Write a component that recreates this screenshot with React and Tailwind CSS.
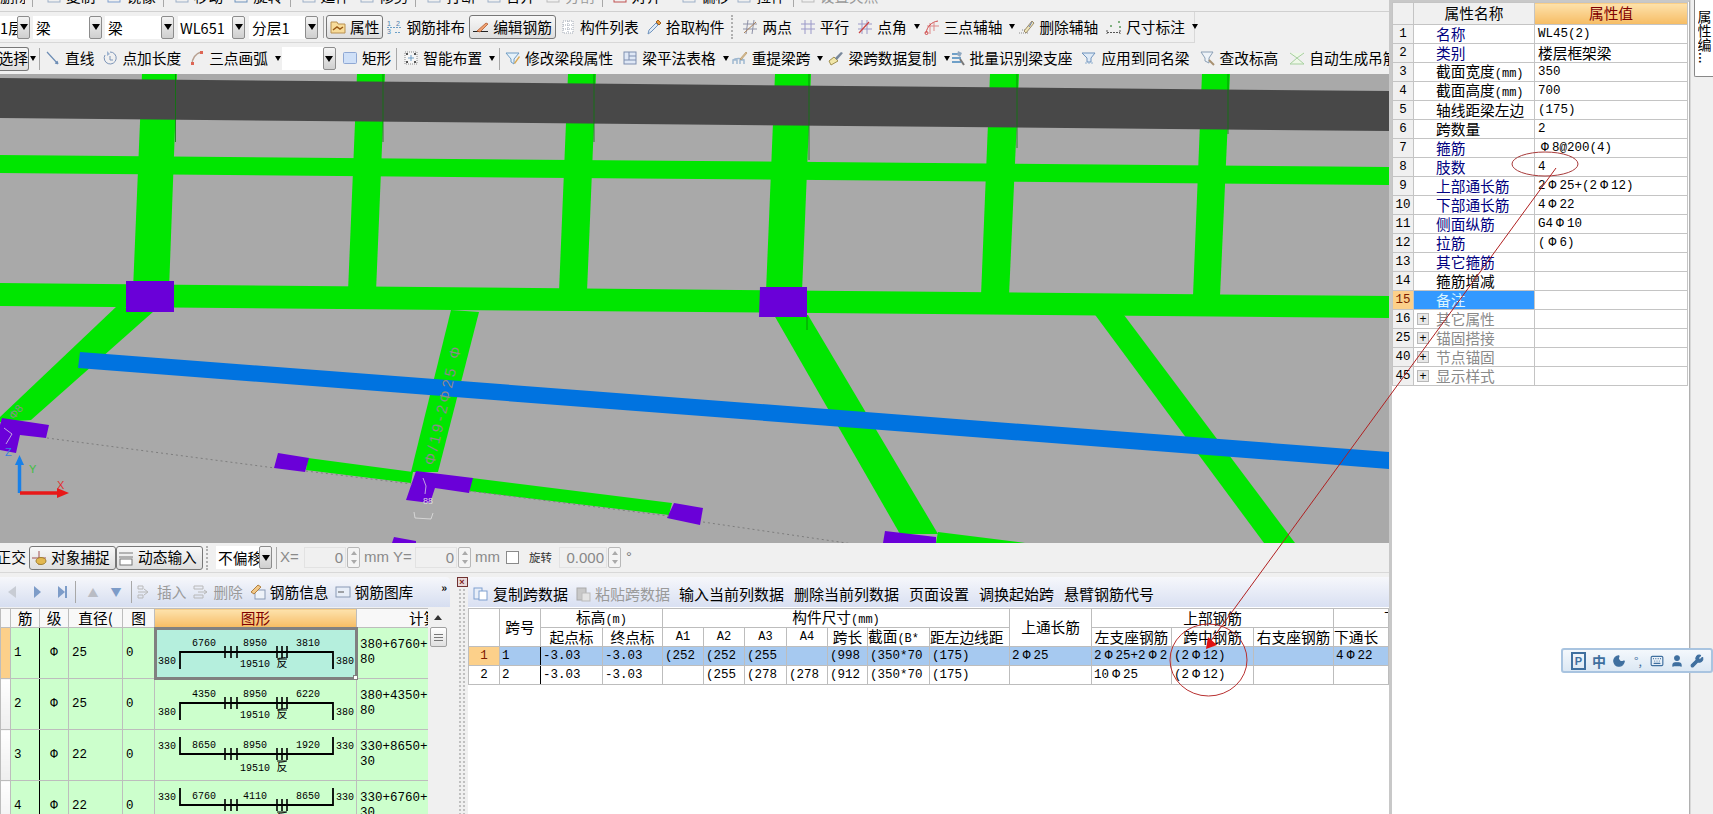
import { Moon, Keyboard, User, Wrench } from "lucide-react";

const CJK = "font-['Noto_Sans_CJK_SC',sans-serif]";
const MONO = "font-['Liberation_Mono','Noto_Sans_CJK_SC',monospace]";

// small toolbar glyphs, all on a 16 box
const ICONS = {
  attr: (
    <>
      <path d="M1 3h6l1 2h7v9H1z" fill="#f8dc9a" stroke="#b89050" />
      <path d="M3 11l4-3 3 2 3-2" fill="none" stroke="#9a5a18" strokeWidth="1.500" />
    </>
  ),
  layout: (
    <>
      <g fontFamily="Liberation Sans" fontSize="7" fill="#4f7fae">
        <text x="1" y="7">1</text>
        <text x="10" y="7">2</text>
        <text x="1" y="15">3</text>
      </g>
      <path d="M1 8.500h14M9 13.500h6" stroke="#6c9fc6" strokeDasharray="2 1" />
    </>
  ),
  edit: (
    <>
      <path d="M0 12.500h15" stroke="#222" />
      <path d="M4 12L13 4l2 1-8 8z" fill="#f0a070" stroke="#b05a30" strokeWidth="0.800" />
    </>
  ),
  list: (
    <>
      <rect x="3" y="2" width="10" height="12" fill="#fff" stroke="#a0a8b4" strokeDasharray="1 1" />
      <path d="M8 2v12M3 6h10M3 10h10" stroke="#a0a8b4" strokeDasharray="1 1" />
    </>
  ),
  pick: (
    <>
      <path d="M2 15l1-4 7-7 2 2-7 7z" fill="#dfeaf6" stroke="#6f93bd" />
      <path d="M10 3l2-2 3 3-2 2z" fill="#e89a3c" stroke="#a06020" />
    </>
  ),
  twoPt: (
    <>
      <path d="M6 1L4 15M12 1L10 15M1 5h14M1 10h14" fill="none" stroke="#8f92a8" />
      <path d="M2 14L14 3" stroke="#a8805a" />
    </>
  ),
  parallel: <path d="M5 1v14M11 1v14M1 5h14M1 10h14" fill="none" stroke="#9a98c8" />,
  angle: (
    <>
      <path d="M5 1v14M10 1v14M1 5h14M1 10h14" fill="none" stroke="#9a98c8" />
      <path d="M2 14L12 3" stroke="#c44" strokeWidth="1.200" />
    </>
  ),
  threePt: (
    <>
      <path d="M6 4v11M10 4v8M3 7h12" fill="none" stroke="#dd8888" />
      <path d="M2 14C3 8 7 3 14 2" fill="none" stroke="#d04848" />
      <circle cx="2.500" cy="14" r="1.500" fill="none" stroke="#d04848" />
    </>
  ),
  delAxis: (
    <>
      <path d="M0 14h9M3 11h5" stroke="#8a8a8a" strokeDasharray="1 1" />
      <path d="M5 12l8-10 2 2-8 10z" fill="#efe6b8" stroke="#9a8a6a" />
      <path d="M10 8l3-5" stroke="#6a7fb5" />
    </>
  ),
  dim: (
    <>
      <path d="M1 11v4M14 11v4M1 13.500h13" stroke="#555" strokeDasharray="2 1" />
      <rect x="4" y="6" width="2" height="2" fill="#7fb07f" />
      <rect x="12" y="2" width="2" height="2" fill="#7fb07f" />
      <rect x="13" y="7" width="2" height="2" fill="#7fb07f" />
    </>
  ),
  line: <path d="M2 2l11 12M13 14l-3-1M13 14l-1-3" fill="none" stroke="#6d8db5" strokeWidth="1.200" />,
  addLen: (
    <>
      <path d="M8 2a6 6 0 1 1-5 3" fill="none" stroke="#7d95b8" />
      <path d="M5 1v5l3-2z" fill="#9fb4d0" />
      <path d="M8 6v4h3" fill="none" stroke="#7d95b8" />
    </>
  ),
  arc: (
    <>
      <path d="M3 15C3 8 6 4 12 2" fill="none" stroke="#b8a090" strokeWidth="1.400" />
      <rect x="11" y="1" width="3" height="3" fill="#d65" />
      <rect x="2" y="12" width="3" height="3" fill="#d65" />
    </>
  ),
  rect: <rect x="1.500" y="2.500" width="13" height="11" rx="1" fill="#cfe0f8" stroke="#8fa8d4" />,
  smart: (
    <>
      <rect x="2" y="2" width="12" height="12" fill="#f6f6f6" stroke="#888" strokeDasharray="1 1" />
      <path d="M8 5v6M5 8h6" stroke="#6f9fc8" />
      <rect x="3" y="3" width="2" height="2" fill="#555" />
      <rect x="11" y="3" width="2" height="2" fill="#555" />
      <rect x="3" y="11" width="2" height="2" fill="#555" />
      <rect x="11" y="11" width="2" height="2" fill="#555" />
    </>
  ),
  segAttr: (
    <>
      <path d="M1 3h13L9 9v5L6 12V9z" fill="#e6f2fa" stroke="#6f9cc4" />
      <path d="M9 13l5-7 1 1-5 7z" fill="#d9a850" />
    </>
  ),
  table: (
    <>
      <rect x="2" y="2" width="12" height="12" fill="#dfe8f6" stroke="#7f8fb0" />
      <path d="M2 10h12M7 6h7M7 2v8" stroke="#7f8fb0" />
    </>
  ),
  reSpan: (
    <>
      <path d="M1 14V10h4v4M8 14V10h4v4M1 10c2-2 9-2 11 0" fill="none" stroke="#9fb8d0" strokeWidth="1.500" />
      <path d="M8 9l6-7 1 1-6 7z" fill="#d8c098" stroke="#b08a50" strokeWidth="0.600" />
    </>
  ),
  copySpan: (
    <>
      <path d="M3 15l-2-4 5-4 4 4z" fill="#f1e6a8" stroke="#a09050" />
      <path d="M7 8l6-6 2 1-6 7z" fill="#78889c" />
    </>
  ),
  batch: (
    <>
      <path d="M2 4h9M2 8h9M2 12h9" stroke="#6fa0c8" strokeWidth="2" />
      <path d="M10 9l4 6" stroke="#777" strokeWidth="2" />
      <path d="M8 1l4 2-2 4-3-2z" fill="#90a8c0" />
    </>
  ),
  sameName: (
    <>
      <path d="M1 3h13L10 8v4H6V8z" fill="#dfeaf6" stroke="#6f93bd" />
      <path d="M4 13h9" stroke="#8fb0d0" strokeDasharray="2 1" />
    </>
  ),
  level: (
    <>
      <path d="M1 2h12l-4 6v5L5 11V8z" fill="#eef3f8" stroke="#8a9fb5" />
      <path d="M9 10l5 5" stroke="#a89070" strokeWidth="2" />
    </>
  ),
  hanger: <path d="M1 3l7 5 7-5M1 14l7-6 7 6z" fill="#eef8e8" stroke="#a8d0a0" />,
  insert: <path d="M1 2h5v3H1zM1 11h5v3H1zM1 8h9M7 5l4 3-4 3" fill="none" stroke="#b8b8b8" />,
  remove: <path d="M1 2h9v3H1zM1 11h9v3H1zM5 8h9M11 6l3 2-3 2" fill="none" stroke="#b8b8b8" />,
  info: (
    <>
      <rect x="5" y="6" width="10" height="9" fill="#eef2f8" stroke="#8a9ab5" />
      <path d="M1 8l7-7 3 2-7 7z" fill="#f2c888" stroke="#b08040" />
    </>
  ),
  lib: (
    <>
      <rect x="1" y="3" width="14" height="10" fill="#e8eef8" stroke="#8a9ab5" />
      <path d="M3 8h6" stroke="#555" />
    </>
  ),
  copy: (
    <>
      <rect x="1" y="2" width="8" height="11" fill="#e8eef8" stroke="#7f9fcf" />
      <rect x="6" y="5" width="8" height="9" fill="#fff" stroke="#7f9fcf" />
    </>
  ),
  paste: (
    <>
      <rect x="2" y="2" width="9" height="12" fill="#c8c8c8" stroke="#aaa" />
      <rect x="7" y="7" width="8" height="8" fill="#e4e4e4" stroke="#bbb" />
    </>
  ),
  snap: (
    <>
      <path d="M1 8h14M8 1v14" stroke="#a05050" />
      <ellipse cx="10" cy="11" rx="5" ry="3.500" fill="#e3b850" stroke="#a08030" />
    </>
  ),
  dyn: (
    <>
      <path d="M1 3h14M1 7h14" stroke="#777" />
      <rect x="2" y="9" width="12" height="6" fill="#fff" stroke="#777" />
    </>
  ),
};

function Ico({ name, className = "w-4 h-4" }) {
  return (
    <svg viewBox="0 0 16 16" className={`shrink-0 ${className}`}>
      {ICONS[name]}
    </svg>
  );
}

function Caret({ className = "" }) {
  return <span className={`shrink-0 w-0 h-0 border-x-[3.5px] border-x-transparent border-t-[5px] border-t-black ${className}`} />;
}

function Select({ label, className, labelClass = "pl-[3px]" }) {
  return (
    <div className={`flex items-stretch h-[23px] shrink-0 bg-white ${className}`}>
      <span className={`flex-1 min-w-0 overflow-hidden whitespace-nowrap leading-[23px] ${labelClass}`}>{label}</span>
      <span className="w-[13px] shrink-0 flex items-center justify-center border border-[#8c8c8c] rounded-[2px] bg-gradient-to-b from-[#f4f4f4] to-[#cfcfcf]">
        <Caret className="border-x-[4px] border-t-[6px]" />
      </span>
    </div>
  );
}

function Tool({ icon, label, caret, className = "", gray, pressed }) {
  return (
    <div
      className={`flex items-center shrink-0 gap-[4px] ${gray ? "text-[#9a9a9a]" : "text-black"} ${
        pressed ? "h-[24px] px-[3px] border border-[#777] rounded-[3px] bg-gradient-to-b from-[#f8f8f8] to-[#dedede]" : ""
      } ${className}`}
    >
      <Ico name={icon} />
      <span className="whitespace-nowrap">{label}</span>
      {caret && <Caret className="ml-[3px]" />}
    </div>
  );
}

const Sep = ({ className = "" }) => <span className={`w-px h-[22px] bg-[#a8a8a8] shrink-0 ${className}`} />;

function TopCut() {
  const items = [
    ["复制", "ml-[13px]", "#9db0c8"],
    ["镜像", "ml-[11px]", "#7f9fcf"],
    null,
    ["移动", "ml-[10px]", "#9db0c8"],
    ["旋转", "ml-[10px]", "#6f93bd"],
    null,
    ["延伸", "ml-[10px]", "#9db0c8"],
    ["修剪", "ml-[9px]", "#9db0c8"],
    null,
    ["打断", "ml-[10px]", "#9db0c8"],
    ["合并", "ml-[10px]", "#9db0c8"],
    ["分割", "ml-[10px]", "#bbbbbb", true],
    null,
    ["对齐", "ml-[9px]", "#c05050"],
    ["偏移", "ml-[20px]", "#9db0c8"],
    ["拉伸", "ml-[6px]", "#9db0c8"],
    null,
    ["设置夹点", "ml-[6px]", "#bbbbbb", true],
  ];
  return (
    <div className="h-[12px] overflow-hidden border-b border-[#d0d0d0] shrink-0">
      <div className="-mt-[14px] h-[20px] flex items-center text-[14.7px] leading-[20px]">
        <span className="w-[25px] overflow-hidden whitespace-nowrap text-right">删除</span>
        <Sep className="ml-[7px]" />
        {items.map((it, i) =>
          it ? (
            <div key={i} className={`flex items-center gap-[4px] shrink-0 ${it[1]} ${it[3] ? "text-[#9a9a9a]" : ""}`}>
              <svg viewBox="0 0 16 16" className="w-4 h-4"><rect x="2" y="2" width="12" height="12" fill="none" stroke={it[2]} /></svg>
              <span>{it[0]}</span>
            </div>
          ) : (
            <Sep key={i} className="ml-[7px]" />
          )
        )}
      </div>
    </div>
  );
}

function Toolbar1() {
  return (
    <div className="h-[31px] shrink-0 flex items-center border-b border-[#d8d8d8] text-[14.7px] w-[1195px] border-r">
      <Select label="1层" className="w-[30px]" labelClass="" />
      <Select label="梁" className="w-[69px] ml-[3px]" />
      <Select label="梁" className="w-[69px] ml-[3px]" />
      <Select label="WL651" className="w-[67px] ml-[4px]" labelClass="pl-[2px] text-[14.5px]" />
      <Select label="分层1" className="w-[69px] ml-[4px]" />
      <Sep className="ml-[5px]" />
      <Tool icon="attr" label="属性" pressed className="ml-[2px]" />
      <Tool icon="layout" label="钢筋排布" className="ml-[3px]" />
      <Tool icon="edit" label="编辑钢筋" pressed className="ml-[4px]" />
      <Tool icon="list" label="构件列表" className="ml-[4px]" />
      <Tool icon="pick" label="拾取构件" className="ml-[7px]" />
      <span className="ml-[7px] h-[24px] w-[2px] border-l-2 border-dotted border-[#b0b0b0] shrink-0" />
      <Tool icon="twoPt" label="两点" className="ml-[9px]" />
      <Tool icon="parallel" label="平行" className="ml-[8px]" />
      <Tool icon="angle" label="点角" caret className="ml-[8px]" />
      <Tool icon="threePt" label="三点辅轴" caret className="ml-[4px]" />
      <Tool icon="delAxis" label="删除辅轴" className="ml-[4px] gap-[2px]" />
      <Tool icon="dim" label="尺寸标注" caret className="ml-[8px]" />
    </div>
  );
}

function Toolbar2() {
  return (
    <div className="h-[31px] shrink-0 flex items-center text-[14.7px] overflow-hidden">
      <div className="w-[29px] h-[24px] border border-[#777] border-l-0 rounded-r-[3px] bg-gradient-to-b from-[#f8f8f8] to-[#dedede] overflow-hidden whitespace-nowrap flex justify-end items-center shrink-0">
        选择
      </div>
      <Caret className="ml-[1px]" />
      <Sep className="ml-[3px]" />
      <Tool icon="line" label="直线" className="ml-[5px]" />
      <Tool icon="addLen" label="点加长度" className="ml-[8px]" />
      <Tool icon="arc" label="三点画弧" caret className="ml-[8px]" />
      <Select label="" className="w-[54px] ml-[1px]" />
      <Tool icon="rect" label="矩形" className="ml-[6px]" />
      <Sep className="ml-[5px]" />
      <Tool icon="smart" label="智能布置" caret className="ml-[6px]" />
      <Sep className="ml-[4px]" />
      <Tool icon="segAttr" label="修改梁段属性" className="ml-[5px]" />
      <Tool icon="table" label="梁平法表格" caret className="ml-[9px]" />
      <Tool icon="reSpan" label="重提梁跨" caret className="ml-[3px]" />
      <Tool icon="copySpan" label="梁跨数据复制" caret className="ml-[5px]" />
      <Tool icon="batch" label="批量识别梁支座" className="gap-[2px]" />
      <Tool icon="sameName" label="应用到同名梁" className="ml-[9px]" />
      <Tool icon="level" label="查改标高" className="ml-[10px]" />
      <Tool icon="hanger" label="自动生成吊筋" className="ml-[11px]" />
    </div>
  );
}

function Canvas() {
  const GREEN = "#00e600";
  const PURPLE = "#6a00d8";
  const BLUE = "#0073e0";
  const green = [
    "142,74 177,74 169,290 133,290",
    "357,74 385,74 376,292 348,292",
    "568,74 596,74 587,292 559,292",
    "775,74 811,74 802,292 766,292",
    "990,74 1019,74 1009,296 981,296",
    "1202,74 1230,74 1220,296 1193,296",
    "0,155 1389,167 1389,185 0,173",
    "0,283 1389,296 1389,318 0,306",
    "117,306 154,311 31,420 0,422 0,417",
    "451,310 479,312 438,472 411,472",
    "774,315 808,315 938,534 900,534",
    "1093,312 1124,315 1295,543 1264,543",
    "308,458 413,472 411,483 306,470",
    "472,478 672,503 669,515 469,491",
    "938,532 1025,543 936,543",
  ];
  const purple = [
    "126,281 174,281 174,312 126,312",
    "760,287 807,287 807,317 759,317",
    "278,453 309,458 305,472 274,468",
    "416,471 473,478 469,493 435,488 430,503 406,500",
    "2,418 49,425 46,438 20,435 16,453 0,450 0,425",
    "674,503 703,508 700,525 667,518",
    "394,537 416,541 416,543 392,543",
    "885,531 936,537 936,543 883,543",
  ];
  return (
    <svg viewBox="0 74 1389 469" className="w-[1389px] h-[469px] block shrink-0 bg-[#a9a9a9]">
      {green.map((p) => (
        <polygon key={p} points={p} fill={GREEN} />
      ))}
      <polygon points="0,78 1389,91 1389,131 0,118" fill="#484848" />
      <path
        d="M175.500 74V142M383 74V142M594 74V142M809 74V160M1017 74V148M1228 74V134M807 317V330"
        stroke="#0a7a0a"
        strokeWidth="0.800"
      />
      {purple.map((p) => (
        <polygon key={p} points={p} fill={PURPLE} />
      ))}
      <polygon points="80,352 1389,452 1389,469 78,368" fill={BLUE} />
      <path d="M47,438 L275,468 M306,471 L412,484 M469,491 L669,516 M703,522 L860,545" stroke="#7d7d7d" strokeDasharray="2 3" />
      <g fill="#8a8a8a" fontFamily="Liberation Sans" fontSize="15">
        <text transform="translate(434,466) rotate(-77)" letterSpacing="3">Φ/19-2Φ25 Φ</text>
        <text transform="translate(14,420) rotate(-50)" fontSize="11">Φ8</text>
      </g>
      <text x="423" y="504" fill="#ddd" fontSize="9" fontFamily="Liberation Sans">88</text>
      <path d="M423,478l3,8 -1,8M4,428l8,6 -6,10M414,512l1,6 16,1 2,-6" fill="none" stroke="#e8e8e8" strokeWidth="0.700" />
      {/* axis */}
      <path d="M19.500 493V464" stroke="#1880e8" strokeWidth="3.500" />
      <polygon points="19.500,455 24,465 15,465" fill="#1880e8" />
      <path d="M20 493H60" stroke="#e81818" strokeWidth="3.500" />
      <polygon points="69,493 57,488 57,498" fill="#e81818" />
      <g fontFamily="Liberation Sans" fontSize="11">
        <text x="57" y="489" fill="#e03030">X</text>
        <text x="29" y="473" fill="#40c040">Y</text>
        <text x="5" y="456" fill="#3a80e0">Z</text>
      </g>
    </svg>
  );
}

function SpinInput({ value, className }) {
  return (
    <div className="flex shrink-0">
      <div className={`h-[21px] bg-[#f0f0f0] border border-[#e2e2e2] text-right pr-[2px] text-[#888] leading-[20px] font-['Liberation_Sans'] text-[15px] ${className}`}>{value}</div>
      <div className="w-[13px] h-[21px] flex flex-col border border-[#b8b8b8] rounded-[2px] ml-[1px] items-center justify-around bg-[#f4f4f4]">
        <span className="w-0 h-0 border-x-[3px] border-x-transparent border-b-[4px] border-b-[#aaa]" />
        <span className="w-0 h-0 border-x-[3px] border-x-transparent border-t-[4px] border-t-[#aaa]" />
      </div>
    </div>
  );
}

function StatusBar() {
  return (
    <div className="h-[30px] shrink-0 flex items-center text-[14.7px] border-b border-[#d8d8d8] overflow-hidden">
      <span className="w-[26px] overflow-hidden whitespace-nowrap flex justify-end shrink-0">正交</span>
      <Tool icon="snap" label="对象捕捉" pressed className="ml-[3px] gap-[2px] !px-[1px] w-[87px]" />
      <Tool icon="dyn" label="动态输入" pressed className="gap-[2px] !px-[1px] w-[87px]" />
      <span className="ml-[3px] h-[24px] w-[2px] border-l-2 border-dotted border-[#b0b0b0] shrink-0" />
      <Select label="不偏移" className="w-[56px] ml-[8px]" labelClass="pl-[2px]" />
      <Sep className="ml-[4px]" />
      <div className="ml-[3px] text-[#8a8a8a] font-['Liberation_Sans'] text-[15px] w-[24px] shrink-0">X=</div>
      <SpinInput value="0" className="w-[42px]" />
      <div className="ml-[4px] text-[#8a8a8a] font-['Liberation_Sans'] text-[15px] w-[51px] shrink-0">mm Y=</div>
      <SpinInput value="0" className="w-[42px]" />
      <div className="ml-[4px] text-[#8a8a8a] font-['Liberation_Sans'] text-[15px] w-[28px] shrink-0">mm</div>
      <span className="ml-[3px] w-[13px] h-[13px] border border-[#8a8a8a] bg-white shrink-0" />
      <span className="ml-[10px] text-[11.500px] text-[#333] w-[30px] whitespace-nowrap shrink-0">旋转</span>
      <SpinInput value="0.000" className="w-[48px]" />
      <span className="ml-[5px] text-[#777] font-['Liberation_Sans']">°</span>
    </div>
  );
}

function Shape({ left, a, b, c, right, up }) {
  const hook = up ? "M25 7V24H178V7" : "M25 41V24H178V41";
  const side = up ? 16 : 33;
  const sub = up ? 38 : 36;
  return (
    <svg viewBox="0 0 202 50" className="w-[202px] h-[50px] block">
      <path d={hook} fill="none" stroke="#000" strokeWidth="1.800" />
      <path d="M70 18V30M76 18V30M82 18V30M122 18V30M127 18V30M132 18V30" stroke="#000" strokeWidth="1.600" />
      <path d="M122 31H132" stroke="#000" strokeWidth="1" />
      <g fontFamily="Liberation Mono" fontSize="10" textAnchor="middle" fill="#000" dominantBaseline="middle">
        <text x="49" y="15">{a}</text>
        <text x="100" y="15">{b}</text>
        <text x="153" y="15">{c}</text>
        <text x="12" y={side}>{left}</text>
        <text x="190" y={side}>{right}</text>
        <text x="100" y={sub}>19510</text>
        <text x="127" y={sub} fontFamily="Noto Sans CJK SC" fontSize="11">反</text>
      </g>
    </svg>
  );
}

const BAR_ROWS = [
  { n: 1, d: 25, left: 380, a: 6760, b: 8950, c: 3810, right: 380, calc: "380+6760+", calc2: "80", on: true },
  { n: 2, d: 25, left: 380, a: 4350, b: 8950, c: 6220, right: 380, calc: "380+4350+", calc2: "80" },
  { n: 3, d: 22, left: 330, a: 8650, b: 8950, c: 1920, right: 330, calc: "330+8650+", calc2: "30", up: true },
  { n: 4, d: 22, left: 330, a: 6760, b: 4110, c: 8650, right: 330, calc: "330+6760+", calc2: "30", up: true },
];

function BarPanel() {
  const nav = "w-0 h-0 border-y-[6px] border-y-transparent";
  return (
    <div className="w-[450px] shrink-0 flex flex-col pt-[4px] overflow-hidden">
      <div className="h-[30px] shrink-0 flex items-center bg-gradient-to-b from-[#f6f7fb] to-[#d6def0] text-[14.7px] rounded-tr-[4px] relative">
        <span className={`${nav} ml-[8px] border-r-[8px] border-r-[#c8ccd4]`} />
        <span className={`${nav} ml-[18px] border-l-[7px] border-l-[#7d9cc8]`} />
        <span className={`${nav} ml-[17px] border-l-[7px] border-l-[#7d9cc8]`} />
        <span className="w-[2px] h-[12px] bg-[#7d9cc8]" />
        <Sep className="ml-[8px]" />
        <span className="ml-[10px] text-[#b9bcc4] text-[11px] w-[14px] text-center">▲</span>
        <span className="ml-[9px] text-[#7d9cc8] text-[11px] w-[14px] text-center">▼</span>
        <Sep className="ml-[8px]" />
        <Tool icon="insert" label="插入" gray className="ml-[5px]" />
        <Tool icon="remove" label="删除" gray className="ml-[7px]" />
        <Tool icon="info" label="钢筋信息" className="ml-[7px]" />
        <Tool icon="lib" label="钢筋图库" className="ml-[6px]" />
        <span className="absolute right-[3px] top-[2px] text-[11px] font-bold">»</span>
      </div>
      <div className="flex flex-1 min-h-0 bg-white mt-px">
        <div className="w-[428px] shrink-0 overflow-hidden">
          <table className="table-fixed border-collapse w-[428px] text-[14.7px]">
            <colgroup>
              <col className="w-[10px]" />
              <col className="w-[29px]" />
              <col className="w-[29px]" />
              <col className="w-[54px]" />
              <col className="w-[32px]" />
              <col className="w-[202px]" />
              <col className="w-[72px]" />
            </colgroup>
            <thead>
              <tr className="h-[19px] bg-[#f8f8f8] leading-none">
                <th className="border border-[#bdbdbd] font-normal" />
                <th className="border border-[#bdbdbd] font-normal">筋</th>
                <th className="border border-[#bdbdbd] font-normal">级</th>
                <th className="border border-[#bdbdbd] font-normal overflow-hidden whitespace-nowrap">直径(</th>
                <th className="border border-[#bdbdbd] font-normal">图</th>
                <th className="border border-[#bdbdbd] font-normal text-[#800000] bg-gradient-to-b from-[#fde2ac] to-[#f6bc62]">图形</th>
                <th className="border border-[#bdbdbd] font-normal overflow-hidden whitespace-nowrap text-left pl-[52px]">计算</th>
              </tr>
            </thead>
            <tbody className={MONO}>
              {BAR_ROWS.map((r) => (
                <tr key={r.n} className="h-[50px] bg-[#ccffcc] text-[12.500px]">
                  <td className={`border border-[#bdbdbd] ${r.on ? "bg-[#fcd08a]" : "bg-gradient-to-b from-white to-[#eeeeee]"}`} />
                  <td className="border border-[#bdbdbd] border-r-black pl-[3px]">{r.n}</td>
                  <td className="border border-[#bdbdbd] text-center">Φ</td>
                  <td className="border border-[#bdbdbd] pl-[3px]">{r.d}</td>
                  <td className="border border-[#bdbdbd] pl-[3px]">0</td>
                  <td className={`border border-[#bdbdbd] p-0 relative ${r.on ? "bg-[#b5efdd] outline-3 -outline-offset-2 outline-[#808080]" : ""}`}>
                    <Shape {...r} />
                    {r.on && <span className="absolute -right-[2px] -bottom-[2px] w-[5px] h-[5px] bg-white border border-[#808080]" />}
                  </td>
                  <td className="border border-[#bdbdbd] pl-[3px] leading-[15px] overflow-hidden whitespace-nowrap">
                    {r.calc}
                    <br />
                    {r.calc2}
                  </td>
                </tr>
              ))}
            </tbody>
          </table>
        </div>
        <div className="w-[20px] shrink-0 bg-[#f0f0f0] flex flex-col items-center">
          <span className="mt-[7px] w-0 h-0 border-x-[4px] border-x-transparent border-b-[5px] border-b-[#333]" />
          <div className="mt-[7px] w-[17px] h-[20px] border border-[#a0a0a0] rounded-[2px] bg-gradient-to-b from-white to-[#e0e0e0] flex flex-col justify-center items-center gap-[2px]">
            <span className="w-[9px] h-px bg-[#777]" />
            <span className="w-[9px] h-px bg-[#777]" />
            <span className="w-[9px] h-px bg-[#777]" />
          </div>
        </div>
        <div className="flex-1 bg-[#f0f0f0]" />
      </div>
    </div>
  );
}

const SPAN_COLS = [
  "w-[31px]", "w-[41px]", "w-[62px]", "w-[60px]", "w-[41px]", "w-[41px]", "w-[42px]", "w-[41px]", "w-[40px]",
  "w-[62px]", "w-[80px]", "w-[82px]", "w-[80px]", "w-[82px]", "w-[80px]", "w-[55px]",
];

// rebar grade mark is double width in the app's font
function Bar() {
  return <span className="inline-block w-[14px] text-center text-[13px] leading-none">Φ</span>;
}

function SpanPanel() {
  const td = "border border-[#bdbdbd] px-[2px] overflow-hidden whitespace-nowrap";
  const th = "border border-[#bdbdbd] font-normal overflow-hidden whitespace-nowrap";
  const rows = [
    {
      n: 1, on: true,
      cells: [
        "-3.03", "-3.03", "(252", "(252", "(255", "", "(998", "(350*70", "(175)",
        <>2<Bar />25</>, <>2<Bar />25+2<Bar />2</>, <>(2<Bar />12)</>, "", <>4<Bar />22</>,
      ],
    },
    {
      n: 2,
      cells: [
        "-3.03", "-3.03", "", "(255", "(278", "(278", "(912", "(350*70", "(175)",
        "", <>10<Bar />25</>, <>(2<Bar />12)</>, "", "",
      ],
    },
  ];
  return (
    <div className="flex-1 min-w-0 flex mt-[4px] ml-[6px] overflow-hidden">
      <div className="w-[12px] shrink-0 flex flex-col items-center">
        <span className="w-[11px] h-[10px] border border-[#703030] bg-[#e8d8d8] text-[#802020] text-[9px] leading-[8px] text-center font-bold font-['Liberation_Sans']">×</span>
        <div className="flex-1 w-[8px] mt-px bg-[radial-gradient(#c0c0c0_1px,transparent_1px)] bg-[length:4px_4px]" />
      </div>
      <div className="flex-1 min-w-0 flex flex-col bg-white">
        <div className="h-[30px] shrink-0 flex items-end pb-[2px] pl-[5px] gap-[10px] bg-gradient-to-b from-[#f6f7fb] to-[#d9e0f2] text-[15px]">
          <Tool icon="copy" label="复制跨数据" className="gap-[3px]" />
          <Tool icon="paste" label="粘贴跨数据" gray className="gap-[4px] -ml-[3px]" />
          <span className="-ml-[1px] whitespace-nowrap">输入当前列数据</span>
          <span className="whitespace-nowrap">删除当前列数据</span>
          <span className="whitespace-nowrap">页面设置</span>
          <span className="whitespace-nowrap">调换起始跨</span>
          <span className="whitespace-nowrap">悬臂钢筋代号</span>
        </div>
        <table className="table-fixed border-collapse w-[920px] mt-px text-[14.7px] leading-none">
          <colgroup>
            {SPAN_COLS.map((c, i) => (
              <col key={i} className={c} />
            ))}
          </colgroup>
          <thead>
            <tr className="h-[19px]">
              <th rowSpan={2} className={th} />
              <th rowSpan={2} className={th}>跨号</th>
              <th colSpan={2} className={th}>标高<span className={`${MONO} text-[12px]`}>(m)</span></th>
              <th colSpan={7} className={th}>构件尺寸<span className={`${MONO} text-[12px]`}>(mm)</span></th>
              <th rowSpan={2} className={th}>上通长筋</th>
              <th colSpan={3} className={th}>上部钢筋</th>
              <th className={`${th} text-left pl-[50px]`}>下部钢筋</th>
            </tr>
            <tr className="h-[19px]">
              <th className={th}>起点标</th>
              <th className={th}>终点标</th>
              <th className={`${th} ${MONO} text-[12px]`}>A1</th>
              <th className={`${th} ${MONO} text-[12px]`}>A2</th>
              <th className={`${th} ${MONO} text-[12px]`}>A3</th>
              <th className={`${th} ${MONO} text-[12px]`}>A4</th>
              <th className={th}>跨长</th>
              <th className={`${th} text-left`}>截面<span className={`${MONO} text-[12px]`}>(B*</span></th>
              <th className={`${th} text-left`}>距左边线距</th>
              <th className={th}>左支座钢筋</th>
              <th className={th}>跨中钢筋</th>
              <th className={th}>右支座钢筋</th>
              <th className={`${th} text-left`}>下通长</th>
            </tr>
          </thead>
          <tbody className={`${MONO} text-[12.500px]`}>
            {rows.map((r) => (
              <tr key={r.n} className={`h-[19px] ${r.on ? "bg-[#a6c9f0]" : ""}`}>
                <td className={`${td} text-center ${r.on ? "bg-[#fcd08a] text-[#802000]" : ""}`}>{r.n}</td>
                <td className={`${td} border-r-black`}>{r.n}</td>
                {r.cells.map((c, i) => (
                  <td key={i} className={td}>{c}</td>
                ))}
              </tr>
            ))}
          </tbody>
        </table>
      </div>
    </div>
  );
}

const NAVY = "text-[#000080]";
const PROPS = [
  { n: 1, name: "名称", v: "WL45(2)", c: NAVY },
  { n: 2, name: "类别", v: "楼层框架梁", c: NAVY, cjk: true },
  { n: 3, name: "截面宽度", unit: "(mm)", v: "350" },
  { n: 4, name: "截面高度", unit: "(mm)", v: "700" },
  { n: 5, name: "轴线距梁左边", v: "(175)" },
  { n: 6, name: "跨数量", v: "2" },
  { n: 7, name: "箍筋", v: <><Bar />8@200(4)</>, c: NAVY },
  { n: 8, name: "肢数", v: "4", c: NAVY },
  { n: 9, name: "上部通长筋", v: <>2<Bar />25+(2<Bar />12)</>, c: NAVY },
  { n: 10, name: "下部通长筋", v: <>4<Bar />22</>, c: NAVY },
  { n: 11, name: "侧面纵筋", v: <>G4<Bar />10</>, c: NAVY },
  { n: 12, name: "拉筋", v: <>(<Bar />6)</>, c: NAVY },
  { n: 13, name: "其它箍筋", v: "", c: NAVY },
  { n: 14, name: "箍筋增减", v: "" },
  { n: 15, name: "备注", v: "", sel: true },
  { n: 16, name: "其它属性", v: "", plus: true },
  { n: 25, name: "锚固搭接", v: "", plus: true },
  { n: 40, name: "节点锚固", v: "", plus: true },
  { n: 45, name: "显示样式", v: "", plus: true },
];

function PropPanel() {
  return (
    <div className="w-[301px] shrink-0 h-full bg-white border-l-[3px] border-t-2 border-[#c8c8c8] border-r border-r-[#b0b0b0]">
      <table className="table-fixed border-collapse w-[295px] text-[14.7px]">
        <colgroup>
          <col className="w-[21px]" />
          <col className="w-[121px]" />
          <col className="w-[153px]" />
        </colgroup>
        <thead>
          <tr className="h-[22px] leading-none">
            <th className="border border-[#c4c4c4] bg-[#f0f0f0] font-normal" />
            <th className="border border-[#c4c4c4] bg-[#f0f0f0] font-normal">属性名称</th>
            <th className="border border-[#c4c4c4] font-normal text-[#800000] bg-gradient-to-b from-[#fde2ac] to-[#f6bc62]">属性值</th>
          </tr>
        </thead>
        <tbody>
          {PROPS.map((p) => (
            <tr key={p.n} className="h-[19px] leading-none">
              <td className={`border border-[#c4c4c4] text-center text-[12.500px] ${MONO} ${p.sel ? "bg-[#fcd08a] text-[#802000]" : "bg-[#f0f0f0]"}`}>{p.n}</td>
              <td className={`border border-[#c4c4c4] relative pl-[22px] whitespace-nowrap overflow-hidden ${p.sel ? "bg-[#3399ff] text-[#d8f4ff]" : ""} ${p.plus ? "text-[#8a8a8a]" : p.c || ""}`}>
                {p.plus && (
                  <span className="absolute left-[3px] top-[3px] w-[12px] h-[12px] border border-[#b8b8b8] bg-[#e8e8e8] text-black text-[12px] leading-[10px] text-center font-['Liberation_Sans']">+</span>
                )}
                {p.name}
                {p.unit && <span className={`${MONO} text-[12px]`}>{p.unit}</span>}
              </td>
              <td className={`border border-[#c4c4c4] pl-[3px] whitespace-nowrap ${p.cjk ? "" : `${MONO} text-[12.500px]`}`}>{p.v}</td>
            </tr>
          ))}
        </tbody>
      </table>
    </div>
  );
}

function SideTab() {
  return (
    <div className="flex-1 border-l border-[#d8d8d8] bg-[#f0f0f0] pl-[3px]">
      <div className="w-[20px] h-[77px] bg-white border border-t-0 border-r-0 border-[#888] flex justify-center pt-[10px] rounded-bl-[2px]">
        <span className="[writing-mode:vertical-rl] text-[14px] leading-none overflow-hidden h-[60px] whitespace-nowrap">属性编...</span>
      </div>
    </div>
  );
}

function Annotations() {
  return (
    <svg viewBox="0 0 1713 814" className="absolute inset-0 w-[1713px] h-[814px] pointer-events-none">
      <ellipse cx="1545" cy="164" rx="33" ry="12" fill="none" stroke="#a83a3a" />
      <ellipse cx="1208.500" cy="660" rx="38.500" ry="36" fill="none" stroke="#b83030" />
      <line x1="1556" y1="168" x2="1210" y2="642" stroke="#b02020" />
      <polygon points="1206,649 1208,637 1217,645" fill="#e01010" />
    </svg>
  );
}

function ImeBar() {
  const ic = "w-[14px] h-[14px] text-[#3f6f9f]";
  return (
    <div className="absolute left-[1561px] top-[648px] w-[152px] h-[25px] flex items-center pl-[8px] gap-[6px] rounded-[3px] border-2 border-[#a9c4e0] bg-gradient-to-b from-[#f4f8fc] to-[#dce8f4]">
      <span className="w-[15px] h-[18px] border-2 border-[#3f6f9f] text-[#3f6f9f] text-[11px] leading-[14px] text-center font-bold font-['Liberation_Sans'] shrink-0">P</span>
      <span className="text-[#3f6f9f] text-[14px] leading-none font-bold">中</span>
      <Moon className={`${ic} fill-[#3f6f9f]`} />
      <span className="text-[#3f6f9f] text-[12px] leading-none w-[12px] text-center">°,</span>
      <Keyboard className={ic} />
      <User className={`${ic} fill-[#3f6f9f]`} />
      <Wrench className={`${ic} fill-[#3f6f9f]`} />
    </div>
  );
}

export default function App() {
  return (
    <div className={`relative w-[1713px] h-[814px] overflow-hidden flex bg-[#f0f0f0] text-black ${CJK}`}>
      <div className="w-[1389px] shrink-0 h-full flex flex-col">
        <TopCut />
        <Toolbar1 />
        <Toolbar2 />
        <Canvas />
        <StatusBar />
        <div className="flex-1 min-h-0 flex">
          <BarPanel />
          <SpanPanel />
        </div>
      </div>
      <PropPanel />
      <SideTab />
      <Annotations />
      <ImeBar />
    </div>
  );
}
